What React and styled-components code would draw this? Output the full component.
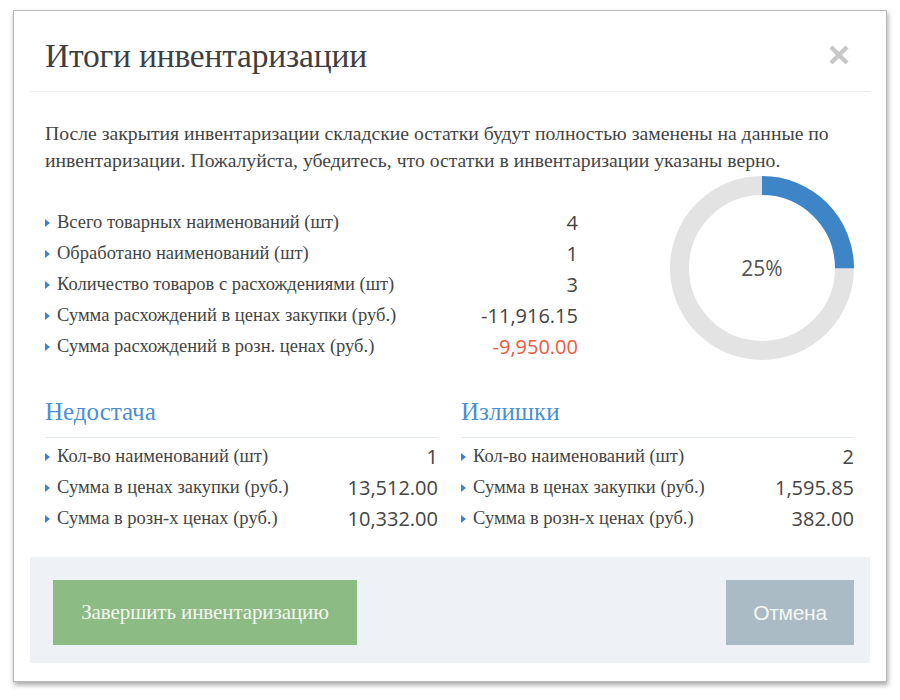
import React from "react";
import styled, { createGlobalStyle } from "styled-components";

const serif = `"Liberation Serif", "Times New Roman", serif`;
const sans = `"Open Sans", "Liberation Sans", sans-serif`;

const Global = createGlobalStyle`
  html, body { margin: 0; padding: 0; background: #fff; }
  body { font-family: ${serif}; color: #444; }
`;

const Page = styled.div`
  padding: 10px 0 18px 13px;
`;

const Card = styled.div`
  width: 874px;
  background: #fff;
  border: 1px solid #b9b9b9;
  box-shadow: 1px 3px 5px rgba(0, 0, 0, 0.35);
  padding: 0 16px 18px 16px;
  box-sizing: border-box;
`;

const Header = styled.div`
  display: flex;
  align-items: center;
  justify-content: space-between;
  height: 80px;
  padding: 0 20px 0 15px;
  border-bottom: 1px solid #eeeeee;
`;

const Title = styled.h1`
  margin: 10px 0 0;
  font-family: ${serif};
  font-weight: normal;
  font-size: 33.5px;
  line-height: 38px;
  color: #3f3f3f;
  letter-spacing: -0.2px;
`;

const Close = styled.button`
  border: 0;
  background: none;
  padding: 0;
  margin-top: 8px;
  width: 22px;
  height: 22px;
  display: flex;
  cursor: pointer;
`;

const Body = styled.div`
  padding: 28px 16px 23px 15px;
`;

const Intro = styled.p`
  margin: 0 0 2px;
  font-family: ${serif};
  font-size: 19.7px;
  line-height: 27px;
  color: #444;
`;

const Overview = styled.div`
  display: flex;
  align-items: flex-start;
`;

const StatList = styled.div`
  width: ${(p) => p.$width || "auto"};
  margin-top: ${(p) => p.$offset || 0}px;
  display: flex;
  flex-direction: column;
`;

const Row = styled.div`
  display: flex;
  align-items: center;
  justify-content: space-between;
  height: 31px;
`;

const Label = styled.span`
  position: relative;
  padding-left: 12px;
  font-family: ${serif};
  font-size: 18.5px;
  color: #444;
  &::before {
    content: "";
    position: absolute;
    left: 0;
    top: 50%;
    margin-top: -4px;
    border-style: solid;
    border-width: 4px 0 4px 5px;
    border-color: transparent transparent transparent #3d85c6;
  }
`;

const Value = styled.span`
  font-family: ${sans};
  font-size: 20px;
  color: ${(p) => (p.$negative ? "#ea5a43" : "#444")};
`;

const Donut = styled.div`
  margin-left: auto;
  position: relative;
  width: 184px;
  height: 184px;
`;

const DonutLabel = styled.span`
  position: absolute;
  inset: 0;
  display: flex;
  align-items: center;
  justify-content: center;
  font-family: ${sans};
  font-size: 21px;
  color: #555;
`;

const Columns = styled.div`
  display: grid;
  grid-template-columns: 1fr 1fr;
  column-gap: 23px;
  margin-top: 35px;
`;

const Section = styled.div`
  display: flex;
  flex-direction: column;
`;

const SectionTitle = styled.h2`
  margin: 0 0 3px;
  padding-bottom: 10px;
  border-bottom: 1px solid #e1e8f2;
  font-family: ${serif};
  font-weight: normal;
  font-size: 25px;
  line-height: 30px;
  color: #4a8fd6;
`;

const Footer = styled.div`
  display: flex;
  justify-content: space-between;
  align-items: center;
  background: #eef2f7;
  padding: 23px 16px 18px 23px;
`;

const Button = styled.button`
  height: 65px;
  width: ${(p) => p.$width}px;
  border: 0;
  background: ${(p) => p.$bg};
  color: #f4f7f2;
  font-family: ${(p) => (p.$sans ? `"Liberation Sans", Arial, sans-serif` : serif)};
  font-size: 21px;
  letter-spacing: ${(p) => (p.$sans ? "-0.3px" : "-0.1px")};
  cursor: pointer;
`;

const overview = [
  ["Всего товарных наименований (шт)", "4"],
  ["Обработано наименований (шт)", "1"],
  ["Количество товаров с расхождениями (шт)", "3"],
  ["Сумма расхождений в ценах закупки (руб.)", "-11,916.15"],
  ["Сумма расхождений в розн. ценах (руб.)", "-9,950.00", true],
];

const shortage = [
  ["Кол-во наименований (шт)", "1"],
  ["Сумма в ценах закупки (руб.)", "13,512.00"],
  ["Сумма в розн-х ценах (руб.)", "10,332.00"],
];

const surplus = [
  ["Кол-во наименований (шт)", "2"],
  ["Сумма в ценах закупки (руб.)", "1,595.85"],
  ["Сумма в розн-х ценах (руб.)", "382.00"],
];

function StatRows({ rows }) {
  return rows.map(([label, value, negative]) => (
    <Row key={label}>
      <Label>{label}</Label>
      <Value $negative={negative}>{value}</Value>
    </Row>
  ));
}

function Progress({ percent }) {
  const r = 82.5;
  const c = 2 * Math.PI * r;
  return (
    <Donut>
      <svg width="184" height="184" viewBox="0 0 184 184">
        <circle cx="92" cy="92" r={r} fill="none" stroke="#e3e3e3" strokeWidth="19" />
        <circle
          cx="92"
          cy="92"
          r={r}
          fill="none"
          stroke="#3d85c6"
          strokeWidth="19"
          strokeDasharray={`${(c * percent) / 100} ${c}`}
          transform="rotate(-90 92 92)"
        />
      </svg>
      <DonutLabel>{percent}%</DonutLabel>
    </Donut>
  );
}

export default function App() {
  return (
    <>
      <Global />
      <Page>
        <Card>
          <Header>
            <Title>Итоги инвентаризации</Title>
            <Close aria-label="Закрыть">
              <svg width="22" height="22" viewBox="0 0 22 22">
                <path d="M3 3 L19 19 M19 3 L3 19" stroke="#c8c8c8" strokeWidth="4.5" strokeLinecap="butt" />
              </svg>
            </Close>
          </Header>
          <Body>
            <Intro>
              После закрытия инвентаризации складские остатки будут полностью заменены на данные по
              инвентаризации. Пожалуйста, убедитесь, что остатки в инвентаризации указаны верно.
            </Intro>
            <Overview>
              <StatList $width="533px" $offset={31}>
                <StatRows rows={overview} />
              </StatList>
              <Progress percent={25} />
            </Overview>
            <Columns>
              <Section>
                <SectionTitle>Недостача</SectionTitle>
                <StatRows rows={shortage} />
              </Section>
              <Section>
                <SectionTitle>Излишки</SectionTitle>
                <StatRows rows={surplus} />
              </Section>
            </Columns>
          </Body>
          <Footer>
            <Button $bg="#8cbb83" $width={304}>Завершить инвентаризацию</Button>
            <Button $bg="#abbbc6" $width={128} $sans>Отмена</Button>
          </Footer>
        </Card>
      </Page>
    </>
  );
}
